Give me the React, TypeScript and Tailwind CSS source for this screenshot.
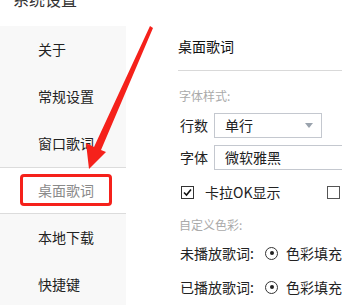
import React from 'react'

const cjk = { fontFamily: '"Noto Sans CJK SC", "Noto Sans", sans-serif' }

const navItems = ['关于', '常规设置', '窗口歌词', '桌面歌词', '本地下载', '快捷键']

const Select = ({ value, wide }: { value: string; wide?: boolean }) => (
  <div
    className={`flex items-center justify-between h-[25px] border border-[#c4c8cf] bg-white pl-[10px] pr-[8px] shrink-0 ${
      wide ? 'w-[150px]' : 'w-[108px]'
    }`}
  >
    <span className="text-[14px] text-[#222]">{value}</span>
    {!wide && <span className="w-0 h-0 border-l-[4px] border-r-[4px] border-t-[5px] border-l-transparent border-r-transparent border-t-[#9aa3ad]" />}
  </div>
)

const Radio = () => (
  <span className="flex items-center justify-center w-[13px] h-[13px] rounded-full border border-[#333] shrink-0">
    <span className="w-[4px] h-[4px] rounded-full bg-[#222]" />
  </span>
)

export default function App() {
  return (
    <div className="relative w-[342px] h-[305px] overflow-hidden bg-white text-[#222]" style={cjk}>
      <div className="h-[26px] overflow-hidden">
        <div className="pl-[13px] -mt-[9px] text-[16px] leading-[16px] text-[#333]">系统设置</div>
      </div>

      <div className="flex">
        {/* sidebar */}
        <div className="w-[126px] shrink-0 bg-[#f8f8f8] h-[290px]">
          {navItems.map((item) =>
            item === '桌面歌词' ? (
              <div key={item} className="h-[47px] bg-white border-y border-[#dcdcdc] flex items-start pl-[20px] pt-[6px]">
                <div className="w-[92px] h-[32px] border-[3px] border-[#f5211b] rounded-[4px] flex items-center pl-[15px] text-[14px] text-[#8a8a8a]">
                  {item}
                </div>
              </div>
            ) : (
              <div key={item} className="h-[47px] flex items-center pl-[38px] text-[14px] text-[#222]">
                {item}
              </div>
            )
          )}
        </div>

        {/* content */}
        <div className="flex-1 min-w-0 pl-[52px] whitespace-nowrap text-[14px]">
          <div className="h-[44px] pt-[10px] leading-[20px] text-[14px] text-[#111]">桌面歌词</div>
          <div className="border-t border-[#d9d9d9] -mr-[10px]" />
          <div className="h-[50px] flex items-center pl-[1px] text-[12px] text-[#aaa]">字体样式:</div>

          <div className="flex items-center gap-[6px] pl-[2px] -mt-[8px]">
            <span>行数</span>
            <Select value="单行" />
          </div>
          <div className="flex items-center gap-[6px] pl-[2px] mt-[7px]">
            <span>字体</span>
            <Select value="微软雅黑" wide />
          </div>

          <div className="flex items-center pl-[3px] mt-[15px] h-[14px]">
            <span className="flex items-center justify-center w-[13px] h-[13px] border border-[#333] bg-white">
              <svg width="11" height="11" viewBox="0 0 11 11">
                <path d="M2 5.5 L4.5 8 L9 2.5" fill="none" stroke="#111" strokeWidth="1.6" />
              </svg>
            </span>
            <span className="ml-[11px]">卡拉OK显示</span>
            <span className="ml-[47px] w-[13px] h-[13px] border border-[#555] bg-white" />
          </div>

          <div className="h-[32px] flex items-center pl-[1px] mt-[10px] text-[12px] text-[#aaa]">自定义色彩:</div>

          <div className="flex items-center pl-[2px] h-[20px] mt-[2px]">
            <span className="w-[102px]">未播放歌词:</span>
            <Radio />
            <span className="ml-[8px]">色彩填充</span>
          </div>
          <div className="flex items-center pl-[2px] h-[20px] mt-[14px]">
            <span className="w-[102px]">已播放歌词:</span>
            <Radio />
            <span className="ml-[8px]">色彩填充</span>
          </div>
        </div>
      </div>

      {/* red annotation arrow */}
      <svg className="absolute left-0 top-0 pointer-events-none" width="342" height="305" viewBox="0 0 342 305">
        <polygon points="150,26 153,28 101,150 106,152 89,169 86,143 94,147" fill="#f5211b" />
      </svg>
    </div>
  )
}
